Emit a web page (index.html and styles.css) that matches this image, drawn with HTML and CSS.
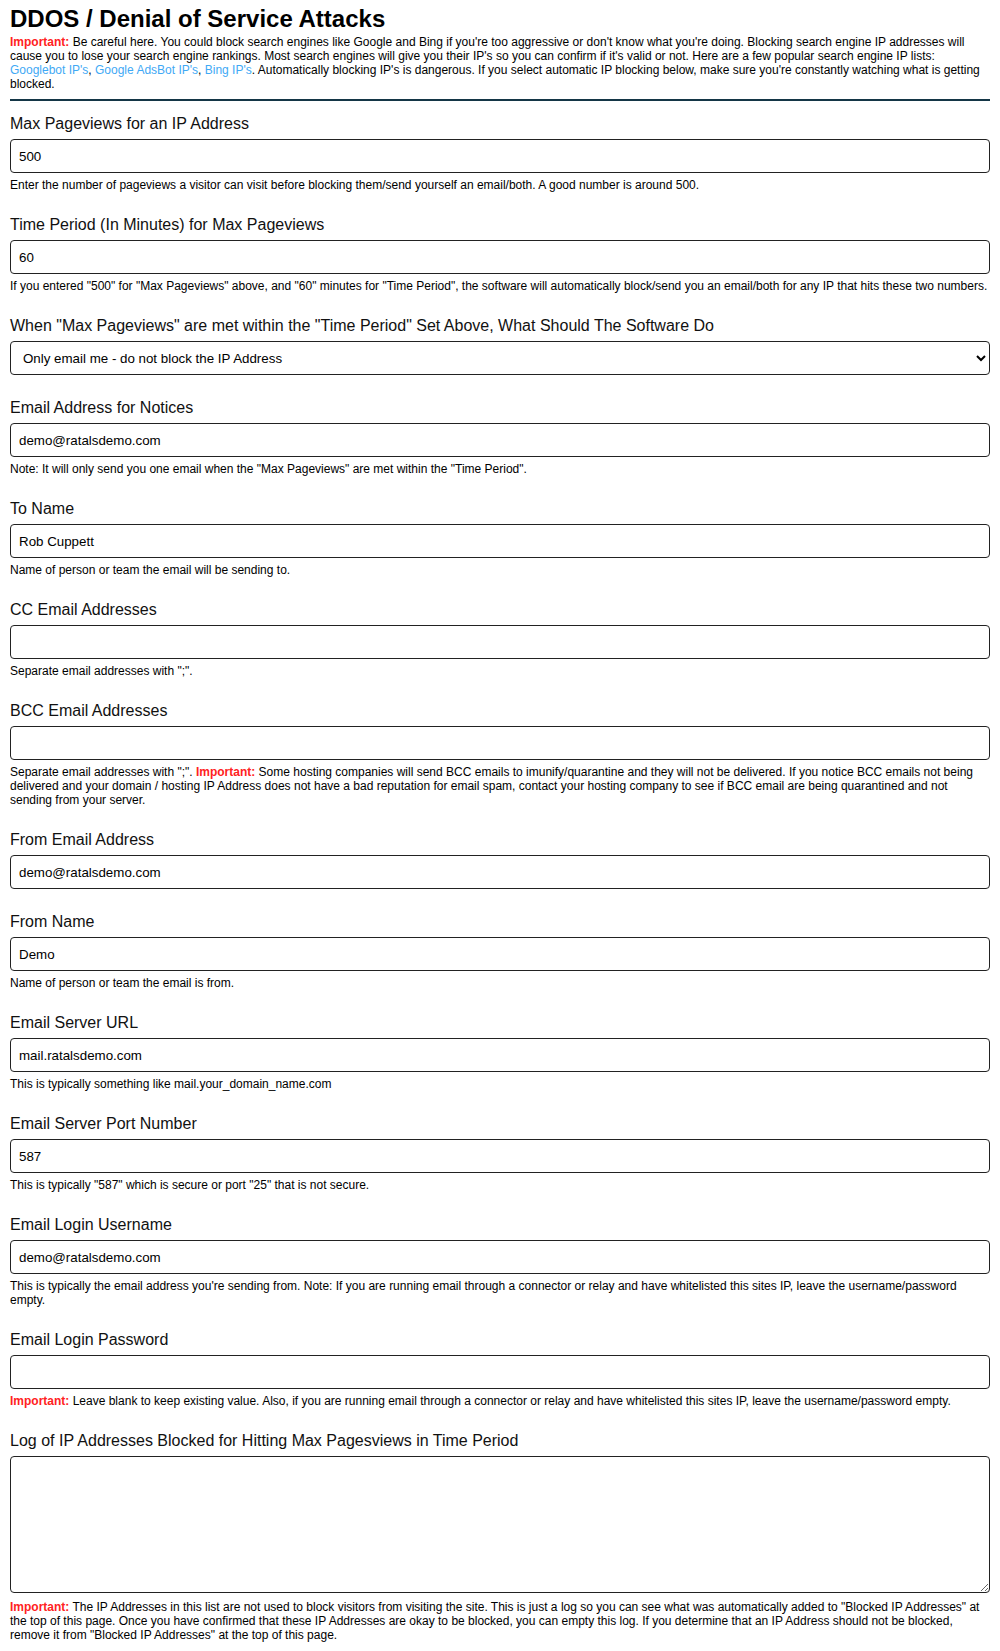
FILE: index.html
```html
<!DOCTYPE html>
<html lang="en">
<head>
<meta charset="utf-8">
<title>DDOS / Denial of Service Attacks</title>
<link rel="stylesheet" href="styles.css">
</head>
<body>
<div class="page">
  <h1 class="title">DDOS / Denial of Service Attacks</h1>
  <p class="intro"><span class="imp">Important:</span> Be careful here. You could block search engines like Google and Bing if you're too aggressive or don't know what you're doing. Blocking search engine IP addresses will cause you to lose your search engine rankings. Most search engines will give you their IP's so you can confirm if it's valid or not. Here are a few popular search engine IP lists: <a class="lnk" href="#">Googlebot IP's</a>, <a class="lnk" href="#">Google AdsBot IP's</a>, <a class="lnk" href="#">Bing IP's</a>. Automatically blocking IP's is dangerous. If you select automatic IP blocking below, make sure you're constantly watching what is getting blocked.</p>
  <hr class="rule">

  <div class="field">
    <label class="lbl">Max Pageviews for an IP Address</label>
    <input class="inp" type="text" value="500">
    <p class="help">Enter the number of pageviews a visitor can visit before blocking them/send yourself an email/both. A good number is around 500.</p>
  </div>

  <div class="field">
    <label class="lbl">Time Period (In Minutes) for Max Pageviews</label>
    <input class="inp" type="text" value="60">
    <p class="help">If you entered "500" for "Max Pageviews" above, and "60" minutes for "Time Period", the software will automatically block/send you an email/both for any IP that hits these two numbers.</p>
  </div>

  <div class="field">
    <label class="lbl">When "Max Pageviews" are met within the "Time Period" Set Above, What Should The Software Do</label>
    <select class="inp sel">
      <option>Only email me - do not block the IP Address</option>
    </select>
  </div>

  <div class="field">
    <label class="lbl">Email Address for Notices</label>
    <input class="inp" type="text" value="demo@ratalsdemo.com">
    <p class="help">Note: It will only send you one email when the "Max Pageviews" are met within the "Time Period".</p>
  </div>

  <div class="field">
    <label class="lbl">To Name</label>
    <input class="inp" type="text" value="Rob Cuppett">
    <p class="help">Name of person or team the email will be sending to.</p>
  </div>

  <div class="field">
    <label class="lbl">CC Email Addresses</label>
    <input class="inp" type="text" value="">
    <p class="help">Separate email addresses with ";".</p>
  </div>

  <div class="field">
    <label class="lbl">BCC Email Addresses</label>
    <input class="inp" type="text" value="">
    <p class="help">Separate email addresses with ";". <span class="imp">Important:</span> Some hosting companies will send BCC emails to imunify/quarantine and they will not be delivered. If you notice BCC emails not being delivered and your domain / hosting IP Address does not have a bad reputation for email spam, contact your hosting company to see if BCC email are being quarantined and not sending from your server.</p>
  </div>

  <div class="field">
    <label class="lbl">From Email Address</label>
    <input class="inp" type="text" value="demo@ratalsdemo.com">
  </div>

  <div class="field">
    <label class="lbl">From Name</label>
    <input class="inp" type="text" value="Demo">
    <p class="help">Name of person or team the email is from.</p>
  </div>

  <div class="field">
    <label class="lbl">Email Server URL</label>
    <input class="inp" type="text" value="mail.ratalsdemo.com">
    <p class="help">This is typically something like mail.your_domain_name.com</p>
  </div>

  <div class="field">
    <label class="lbl">Email Server Port Number</label>
    <input class="inp" type="text" value="587">
    <p class="help">This is typically "587" which is secure or port "25" that is not secure.</p>
  </div>

  <div class="field">
    <label class="lbl">Email Login Username</label>
    <input class="inp" type="text" value="demo@ratalsdemo.com">
    <p class="help">This is typically the email address you're sending from. Note: If you are running email through a connector or relay and have whitelisted this sites IP, leave the username/password empty.</p>
  </div>

  <div class="field">
    <label class="lbl">Email Login Password</label>
    <input class="inp" type="password" value="">
    <p class="help"><span class="imp">Important:</span> Leave blank to keep existing value. Also, if you are running email through a connector or relay and have whitelisted this sites IP, leave the username/password empty.</p>
  </div>

  <div class="field">
    <label class="lbl">Log of IP Addresses Blocked for Hitting Max Pagesviews in Time Period</label>
    <textarea class="inp area"></textarea>
    <p class="help"><span class="imp">Important:</span> The IP Addresses in this list are not used to block visitors from visiting the site. This is just a log so you can see what was automatically added to "Blocked IP Addresses" at the top of this page. Once you have confirmed that these IP Addresses are okay to be blocked, you can empty this log. If you determine that an IP Address should not be blocked, remove it from "Blocked IP Addresses" at the top of this page.</p>
  </div>
</div>
</body>
</html>
```

FILE: styles.css
```css
html, body {
  margin: 0;
  padding: 0;
  background: #ffffff;
}

body {
  font-family: "Liberation Sans", Arial, sans-serif;
  color: #000000;
}

.page {
  padding: 5px 10px 10px 10px;
}

.title {
  margin: 0;
  font-size: 24px;
  line-height: 28px;
  font-weight: bold;
  color: #000000;
}

.intro {
  margin: 2px 0 0 0;
  font-size: 12px;
  line-height: 14px;
}

.imp {
  color: #ff2222;
  font-weight: bold;
}

.lnk {
  color: #3fa9f5;
  text-decoration: none;
}

.rule {
  border: 0;
  height: 2px;
  background: #143646;
  margin: 8px 0 13px 0;
}

.field {
  display: flex;
  flex-direction: column;
  margin-bottom: 23px;
}

.lbl {
  display: block;
  font-size: 16px;
  line-height: 20px;
  margin-bottom: 5px;
  color: #111111;
}

.inp {
  box-sizing: border-box;
  width: 100%;
  height: 34px;
  margin: 0;
  padding: 0 8px;
  border: 1px solid #222222;
  border-radius: 4px;
  background: #ffffff;
  font-family: "Liberation Sans", Arial, sans-serif;
  font-size: 13.333px;
  color: #000000;
  outline: none;
}

.sel {
  padding: 0 8px;
}

.area {
  height: 137px;
  padding: 6px 8px;
  margin-bottom: 2px;
  resize: vertical;
}

.help {
  margin: 5px 0 0 0;
  font-size: 12px;
  line-height: 14px;
}
```
